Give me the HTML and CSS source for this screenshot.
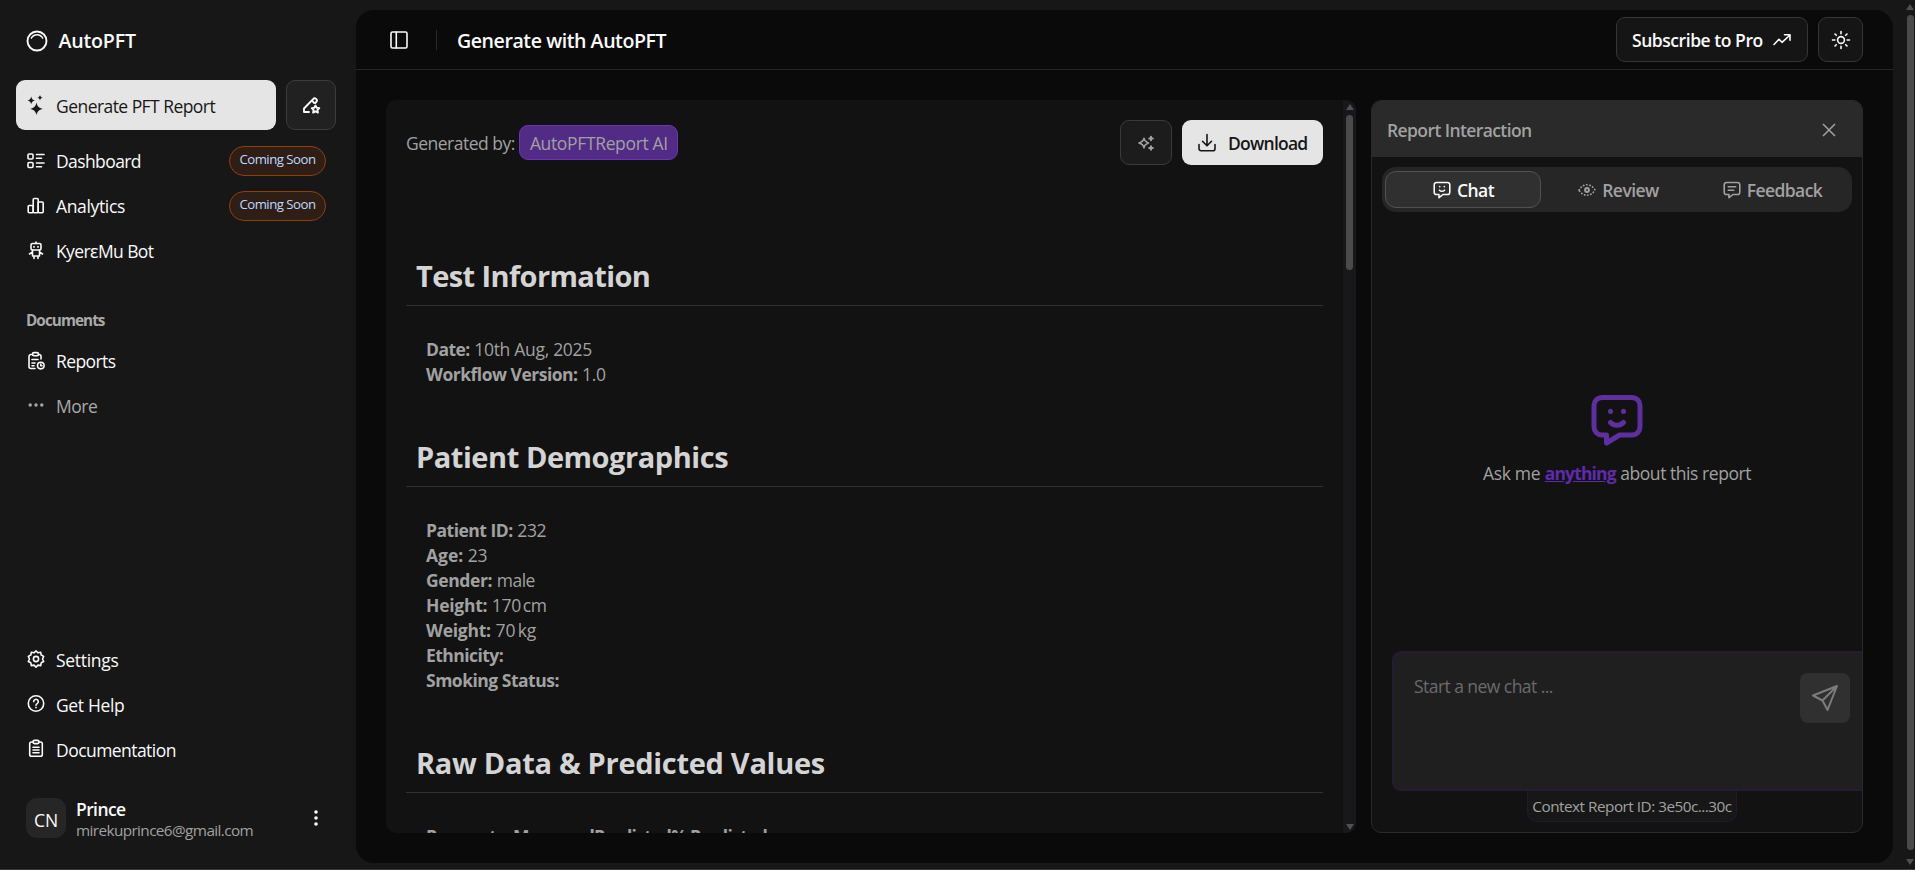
FILE: index.html
```html
<!DOCTYPE html>
<html lang="en">
<head>
<meta charset="utf-8">
<title>AutoPFT</title>
<link rel="stylesheet" href="styles.css">
</head>
<body>
<div class="app">
  <aside class="sidebar">
    <div class="brand">
      <svg class="logo" viewBox="0 0 22 22"><circle cx="11" cy="11" r="9.500"/><path d="M5 8.600C6.300 5.900 8.400 4.700 11 4.700s4.700 1.200 6 3.900"/></svg>
      <span class="k20">AutoPFT</span>
    </div>
    <div class="actions">
      <button class="generate">
        <svg class="ic solid" viewBox="0 0 20 20"><path d="M10.500 7.500c.8 3.900 2.400 5.600 6.400 6.400-4 .8-5.600 2.500-6.400 6.100-.8-3.600-2.400-5.300-6.400-6.100 4-.8 5.600-2.500 6.400-6.400zM5.200 1.500c.5 2.400 1.400 3.400 3.700 3.900-2.300.5-3.200 1.500-3.700 3.900C4.700 6.900 3.800 5.900 1.500 5.400 3.800 4.900 4.700 3.900 5.200 1.500zM14 0c.4 1.700 1.100 2.400 2.800 2.700-1.700.3-2.400 1-2.800 2.700-.4-1.700-1.100-2.400-2.800-2.700 1.700-.3 2.400-1 2.800-2.700z"/></svg>
        <span class="k55">Generate PFT Report</span>
      </button>
      <button class="square">
        <svg class="ic bold" viewBox="0 0 20 20"><path d="M8 17H3v-3.500L12.100 4.100a2 2 0 0 1 3.200 2.800L14.300 8M11 5.300l2 2.600M14.500 10.500l1.200 2.200 2.600.4-1.900 1.900.5 2.600-2.400-1.200-2.400 1.200.5-2.600-1.900-1.900 2.600-.4z"/></svg>
      </button>
    </div>
    <nav class="nav">
      <a class="row"><svg class="ic" viewBox="0 0 20 20"><rect x="2" y="3" width="5" height="5" rx="1"/><rect x="2" y="11.500" width="5" height="5" rx="1"/><path d="M10.500 3.500h7.500M10.500 7.200h5M10.500 12h7.500M10.500 15.800h5"/></svg><span class="k60">Dashboard</span><b class="soon"><span class="k50">Coming Soon</span></b></a>
      <a class="row"><svg class="ic" viewBox="0 0 20 20"><rect x="2.200" y="9.500" width="5" height="7.300" rx="1"/><rect x="7.200" y="2.500" width="5" height="14.300" rx="1"/><rect x="12.200" y="6" width="5" height="10.800" rx="1"/></svg><span class="k35">Analytics</span><b class="soon"><span class="k50">Coming Soon</span></b></a>
      <a class="row"><svg class="ic" viewBox="0 0 20 20"><rect x="5" y="2.500" width="10" height="6.500" rx="1.500"/><path d="M10 2.500V1M8 5.500v.8M12 5.500v.8M6.500 9v6h7V9M3.500 13l3-2M16.500 13l-3-2M8 15v2.500M12 15v2.500"/></svg><span class="k60">KyerɛMu Bot</span></a>
    </nav>
    <div class="group"><span class="k95">Documents</span></div>
    <nav class="nav">
      <a class="row"><svg class="ic" viewBox="0 0 20 20"><path d="M6.500 3.500H5a2 2 0 0 0-2 2v10a2 2 0 0 0 2 2h4M12.500 3.500h.5a2 2 0 0 1 2 2V8M6 8.500h6M6 12h3M6 14.700h2"/><rect x="6.500" y="1.600" width="6" height="3.200" rx="1.500"/><circle cx="14.800" cy="14.600" r="3.300"/><path d="M14.800 13v1.800h1.200"/></svg><span class="k60">Reports</span></a>
      <a class="row muted"><svg class="ic dots" viewBox="0 0 20 20"><circle cx="4.200" cy="9" r="1.700"/><circle cx="10" cy="9" r="1.700"/><circle cx="15.800" cy="9" r="1.700"/></svg><span class="k45">More</span></a>
    </nav>
    <nav class="nav bottom">
      <a class="row"><svg class="ic" viewBox="0 0 20 20"><path d="M10 1.900l2 1.900 2.700-.5.500 2.700 2.500 1.400-1.200 2.600 1.200 2.500-2.500 1.300-.5 2.800-2.700-.5-2 2-2-2-2.700.5-.5-2.800-2.500-1.300 1.200-2.500-1.200-2.600 2.500-1.400.5-2.700 2.700.5z"/><circle cx="10" cy="10" r="2.600"/></svg><span class="k30">Settings</span></a>
      <a class="row"><svg class="ic" viewBox="0 0 20 20"><circle cx="10" cy="9.500" r="7.700"/><path d="M7.700 7.600a2.300 2.300 0 1 1 3.500 2c-.8.500-1.200.9-1.200 1.700M10 13.300v.4"/></svg><span class="k35">Get Help</span></a>
      <a class="row"><svg class="ic" viewBox="0 0 20 20"><path d="M7 3H5.500A1.800 1.800 0 0 0 3.700 4.800v10.700a1.800 1.800 0 0 0 1.800 1.800h9a1.800 1.800 0 0 0 1.800-1.800V4.800A1.800 1.800 0 0 0 14.500 3H13M7 8.300h6M7 11h6M7 13.700h6"/><rect x="7" y="1.400" width="6" height="3.200" rx="1.500"/></svg><span class="k55">Documentation</span></a>
    </nav>
    <div class="user">
      <div class="avatar"><span>CN</span></div>
      <div class="who"><strong class="k60">Prince</strong><small class="k60">mirekuprince6@gmail.com</small></div>
      <svg class="kebab" viewBox="0 0 6 18"><circle cx="3" cy="3" r="1.800"/><circle cx="3" cy="9" r="1.800"/><circle cx="3" cy="15" r="1.800"/></svg>
    </div>
  </aside>

  <main class="main">
    <header class="topbar">
      <svg class="ic" viewBox="0 0 20 20"><rect x="2" y="2" width="16" height="16" rx="1.500"/><path d="M7.300 2v16"/></svg>
      <i class="sep"></i>
      <h1><span class="k45">Generate with AutoPFT</span></h1>
      <button class="subscribe"><span class="k45">Subscribe to Pro</span><svg class="ic" viewBox="0 0 20 20"><path d="M2 14.500L7 9.300l3 3L18 5M12.500 4.700H18v5.600"/></svg></button>
      <button class="theme"><svg class="ic" viewBox="0 0 20 20"><circle cx="10" cy="10" r="3.400"/><path d="M10 1.500v2.300M10 16.200v2.300M1.500 10h2.300M16.200 10h2.300M4 4l1.300 1.300M14.700 14.700L16 16M4 16l1.300-1.300M14.700 5.300L16 4"/></svg></button>
    </header>

    <div class="content">
      <section class="report">
        <div class="doc">
          <div class="doc-head">
            <span class="k50">Generated by:</span>
            <em class="model"><span class="k35">AutoPFTReport AI</span></em>
            <button class="sparkle"><svg class="ic" viewBox="0 0 20 20"><path d="M8 5.200C8.500 8 9.500 9 12.500 10 9.500 11 8.500 12 8 14.800 7.500 12 6.500 11 3 10c3.500-1 4.500-2 5-4.800z"/><path d="M15 3.700v3.600M13.200 5.500h3.600M15 13.200v3.600M13.200 15h3.600" stroke-width="2"/></svg></button>
            <button class="download"><svg class="ic" viewBox="0 0 20 20"><path d="M10 1.500v11M5.500 8.300L10 12.800l4.500-4.500M2 11.500v4.200a2 2 0 0 0 2 2h12a2 2 0 0 0 2-2v-4.200"/></svg><span class="k75">Download</span></button>
          </div>
          <h2><span class="k60">Test Information</span></h2>
          <div class="fields">
            <p><b class="k55">Date:</b> <span class="k30">10th Aug, 2025</span></p>
            <p><b class="k50">Workflow Version:</b> <span class="k35">1.0</span></p>
          </div>
          <h2><span class="k45">Patient Demographics</span></h2>
          <div class="fields">
            <p><b class="k50">Patient ID:</b> <span class="k35">232</span></p>
            <p><b>Age:</b> <span class="k25">23</span></p>
            <p><b class="k40">Gender:</b> <span class="k45">male</span></p>
            <p><b class="k25">Height:</b> <span class="k35">170&#8239;cm</span></p>
            <p><b class="k25">Weight:</b> <span>70&#8239;kg</span></p>
            <p><b class="k55">Ethnicity:</b></p>
            <p><b class="k50">Smoking Status:</b></p>
          </div>
          <h2><span class="k30">Raw Data &amp; Predicted Values</span></h2>
          <div class="fields">
            <p><b class="k70">ParameterMeasuredPredicted% Predicted</b></p>
          </div>
        </div>
        <div class="scroll"><i class="up"></i><i class="thumb"></i><i class="down"></i></div>
      </section>

      <section class="chat">
        <div class="chat-head"><span class="k60">Report Interaction</span>
          <svg class="close" viewBox="0 0 16 16"><path d="M2 2l12 12M14 2L2 14"/></svg></div>
        <div class="tabs">
          <div class="tab active"><svg class="ic" viewBox="0 0 20 20"><path d="M4.500 2.500h11A2.300 2.300 0 0 1 17.800 4.800v7.400a2.300 2.300 0 0 1-2.300 2.300H11L7 17.700v-3.200H4.500a2.300 2.300 0 0 1-2.300-2.300V4.800A2.300 2.300 0 0 1 4.500 2.500zM7.700 6.500v.2M12.300 6.500v.2M7.500 10.200c1.300 1.300 3.700 1.300 5 0"/></svg><span class="k55">Chat</span></div>
          <div class="tab"><svg class="ic" viewBox="0 0 20 20"><path d="M2 10c4-7 12-7 16 0-4 7-12 7-16 0z" stroke-width="1.700" stroke-dasharray=".3 2.900"/><circle cx="10" cy="10" r="1.900" stroke-width="2"/></svg><span class="k55">Review</span></div>
          <div class="tab"><svg class="ic" viewBox="0 0 20 20"><path d="M4.500 2.500h11A2.300 2.300 0 0 1 17.800 4.800v7.400a2.300 2.300 0 0 1-2.300 2.300H11L7 17.700v-3.200H4.500a2.300 2.300 0 0 1-2.300-2.300V4.800A2.300 2.300 0 0 1 4.500 2.500zM6.300 6.800h7.400M6.300 10.200h5.400"/></svg><span class="k60">Feedback</span></div>
        </div>
        <div class="empty">
          <svg class="bot" viewBox="0 0 52 52"><path d="M11 3.500h30a8 8 0 0 1 8 8V33a8 8 0 0 1-8 8H28.500L15.500 49v-8H11a8 8 0 0 1-8-8V11.500a8 8 0 0 1 8-8zM19.500 17.300v.2M32.500 17.300v.2M19.500 28.500c3.500 3.700 9.500 3.700 13 0"/></svg>
          <p><span class="k35">Ask me</span> <a class="k55">anything</a> <span class="k45">about this report</span></p>
        </div>
        <div class="composer">
          <span class="k55">Start a new chat ...</span>
          <button class="send"><svg viewBox="0 0 28 28"><path d="M2 11.500L26 2 16.500 26l-5-9.500zM11.500 16.500L26 2"/></svg></button>
        </div>
        <div class="context"><span class="k50">Context Report ID: 3e50c...30c</span></div>
      </section>
    </div>
  </main>
  <div class="page-scroll"><i class="up"></i><i class="thumb"></i><i class="down"></i></div>
</div>
</body>
</html>
```

FILE: styles.css
```css
* { box-sizing: border-box; margin: 0; padding: 0; }
body {
  width: 1915px; height: 870px; overflow: hidden;
  background: #171717; color: #fafafa;
  font: 17.5px/24px "Open Sans", "Noto Sans", sans-serif;
}
button { font: inherit; color: inherit; border: 0; background: none; display: flex; align-items: center; }
i, em { font-style: normal; display: block; }

/* tracking steps, in hundredths of a pixel */
.k20 { letter-spacing: -.2px; }
.k25 { letter-spacing: -.25px; }
.k30 { letter-spacing: -.3px; }
.k35 { letter-spacing: -.35px; }
.k40 { letter-spacing: -.4px; }
.k45 { letter-spacing: -.45px; }
.k50 { letter-spacing: -.5px; }
.k55 { letter-spacing: -.55px; }
.k60 { letter-spacing: -.6px; }
.k70 { letter-spacing: -.73px; }
.k75 { letter-spacing: -.75px; }
.k95 { letter-spacing: -.95px; }

.app { display: flex; width: 1915px; height: 870px; border-bottom: 1px solid #3b3739; }
.ic { width: 20px; height: 20px; flex: none; fill: none; stroke: currentColor; stroke-width: 1.6; stroke-linecap: round; stroke-linejoin: round; }
.solid, .dots { fill: currentColor; stroke: none; }
.bold { stroke-width: 1.9; }

.sidebar { width: 356px; padding: 26px 0 31px 16px; display: flex; flex-direction: column; }
.brand { height: 29px; padding-left: 9.5px; display: flex; align-items: center; gap: 11px; font-size: 19.6px; font-weight: 600; }
.brand span { padding-top: 1px; }
.logo { width: 22px; height: 22px; fill: none; stroke: #fafafa; stroke-width: 1.9; }
.logo path { stroke-width: 1.4; }
.actions { display: flex; gap: 10px; margin-top: 25px; }
.generate { width: 260px; height: 50px; padding-left: 10px; gap: 10px; border-radius: 9px; background: #e5e5e5; color: #171717; }
.generate span { padding-top: 2px; }
.square { width: 50px; height: 50px; border-radius: 9px; background: #212121; border: 1px solid #3c3c3c; justify-content: center; }
.nav { padding-left: 10px; margin-top: 8px; }
.row { height: 45px; display: flex; align-items: center; gap: 10px; width: 300px; }
.muted { color: #a9a9a9; }
.soon { margin-left: auto; width: 97px; height: 30px; border-radius: 15px; border: 1px solid #8f400c; background: #2f1e15; color: #bedbff; font-size: 13.2px; font-weight: 400; line-height: 25px; text-align: center; }
.group { height: 36px; margin-top: 29px; padding-left: 10px; font-size: 15.3px; font-weight: 700; line-height: 37px; color: #a9a9a9; }
.group + .nav { margin-top: 0; }
.bottom { margin-top: auto; }
.bottom .row > span { padding-top: 2px; }
.user { display: flex; align-items: center; height: 40px; margin-top: 27px; padding-left: 10px; }
.avatar { width: 40px; height: 40px; border-radius: 11px; background: #262626; text-align: center; line-height: 44px; }
.who { width: 234px; padding: 4px 0 0 10px; display: flex; flex-direction: column; }
.who strong { font-weight: 600; line-height: 20px; }
.who small { font-size: 15.3px; color: #a1a1a1; line-height: 22px; }
.kebab { width: 6px; height: 18px; fill: #fafafa; margin-left: 13px; }

.main { width: 1537px; height: 853px; margin-top: 10px; background: #0a0a0a; border-radius: 18px; overflow: hidden; }
.topbar { height: 60px; border-bottom: 1px solid #262626; display: flex; align-items: center; padding: 0 30px 0 33px; }
.sep { width: 1px; height: 20px; background: #2a2a2a; margin: 0 20px 0 27px; }
.topbar h1 { font-size: 19.6px; font-weight: 600; padding-top: 2px; }
.subscribe { margin-left: auto; width: 192px; height: 45px; padding-left: 15px; gap: 9px; border: 1px solid #363636; border-radius: 9px; background: #151515; font-weight: 600; }
.theme { margin-left: 10px; width: 45px; height: 45px; border: 1px solid #363636; border-radius: 9px; background: #151515; justify-content: center; }

.content { display: flex; justify-content: space-between; padding: 30px 30px 0; }
.report { width: 970px; height: 733px; display: flex; background: #121212; border-radius: 10px; overflow: hidden; color: #a1a1a1; }
.doc { width: 957px; padding: 20px 20px 0; }
.doc-head { display: flex; align-items: center; height: 45px; }
.model { width: 159px; height: 35px; margin: 0 auto 0 4px; padding-left: 10px; border: 1px solid #6d35b5; border-radius: 9px; background: #522b86; line-height: 34px; }
.sparkle { width: 52px; height: 45px; border: 1px solid #3a3a3a; border-radius: 9px; background: #1c1c1c; justify-content: center; }
.download { width: 141px; height: 45px; margin-left: 10px; padding-left: 15px; gap: 11px; border-radius: 9px; background: #e5e5e5; color: #171717; font-weight: 600; }
.doc h2 { height: 51px; padding-left: 10px; border-bottom: 1px solid #303036; font-size: 29px; line-height: 42px; font-weight: 700; color: #d4d4d4; }
.doc-head + h2 { margin-top: 90px; }
.fields { padding: 31px 0 49px 20px; }
.fields p { height: 25px; line-height: 25px; white-space: nowrap; }
.fields b { font-weight: 700; }
.scroll { width: 13px; background: #18181a; padding: 4px 3px 3px; display: flex; flex-direction: column; align-items: center; }
.up { border: 4px solid transparent; border-top: 0; border-bottom: 6px solid #505050; }
.down { border: 4px solid transparent; border-bottom: 0; border-top: 6px solid #505050; margin-top: auto; }
.thumb { width: 7px; border-radius: 4px; background: #4a4a4a; }
.scroll .thumb { height: 155px; margin-top: 5px; }

.chat { width: 492px; height: 733px; background: #121212; border: 1px solid #2a2a2a; border-radius: 10px; overflow: hidden; display: flex; flex-direction: column; color: #a1a1a1; }
.chat-head { height: 56px; background: #2a2a2a; padding: 2px 25px 0 15px; display: flex; align-items: center; justify-content: space-between; font-weight: 600; }
.close { width: 16px; height: 16px; fill: none; stroke: #a1a1a1; stroke-width: 1.5; }
.tabs { display: flex; height: 45px; margin: 10px 10px 0; padding: 4px 3px; background: #262626; border-radius: 14px; }
.tab { flex: 1; display: flex; align-items: center; justify-content: center; gap: 5px; font-weight: 600; border-radius: 11px; }
.active { background: #303030; border: 1px solid #525252; color: #fafafa; }
.empty { flex: 1; display: flex; flex-direction: column; align-items: center; padding-top: 182px; }
.bot { width: 52px; height: 52px; fill: none; stroke: #5d2f9f; stroke-width: 5; stroke-linecap: round; stroke-linejoin: round; }
.empty p { margin-top: 15px; }
.empty a { color: #5f2bab; font-weight: 700; text-decoration: underline; letter-spacing: -.85px; }
.composer { width: 480px; height: 140px; margin-left: 20px; padding: 20px 20px 0 20px; background: #1f1f1f; border: 2px solid #241c33; border-radius: 9px; display: flex; justify-content: space-between; color: #6b6b6b; }
.composer > span { padding-top: 1px; }
.send { width: 50px; height: 50px; border-radius: 8px; background: #303030; justify-content: center; }
.send svg { width: 28px; height: 28px; fill: none; stroke: #7c7c7c; stroke-width: 2; stroke-linejoin: round; }
.context { width: 210px; height: 31px; margin: 0 0 10px 155px; border: 1px solid #201a2b; border-top: 0; border-radius: 0 0 10px 10px; background: #171717; text-align: center; font-size: 15.3px; line-height: 30px; white-space: nowrap; }

.page-scroll { margin-left: auto; width: 10px; padding: 4px 1px; display: flex; flex-direction: column; align-items: center; }
.page-scroll .thumb { height: 835px; margin-top: 5px; }
```
